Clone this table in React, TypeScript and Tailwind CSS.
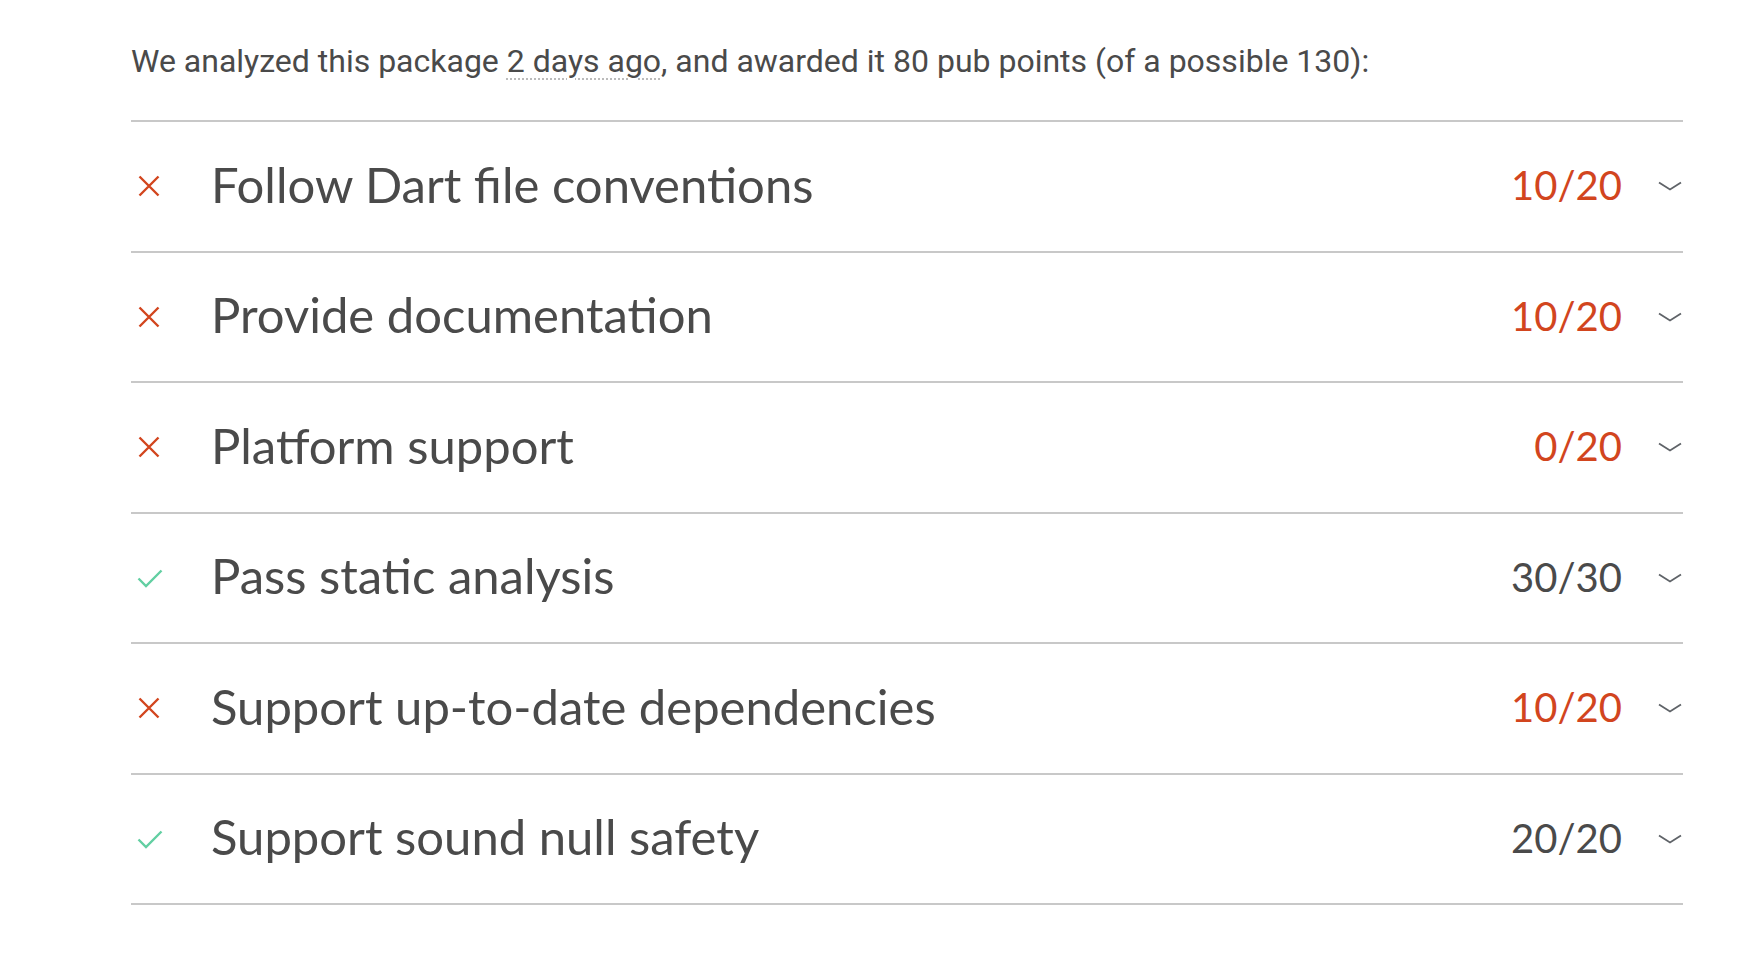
import React from "react";

type Row = { title: string; score: string; ok: boolean };

const rows: Row[] = [
  { title: "Follow Dart file conventions", score: "10/20", ok: false },
  { title: "Provide documentation", score: "10/20", ok: false },
  { title: "Platform support", score: "0/20", ok: false },
  { title: "Pass static analysis", score: "30/30", ok: true },
  { title: "Support up-to-date dependencies", score: "10/20", ok: false },
  { title: "Support sound null safety", score: "20/20", ok: true },
];

function XIcon() {
  return (
    <svg width="24" height="24" viewBox="0 0 24 24" className="block">
      <path d="M2.5 2.5 L21.5 21.5 M21.5 2.5 L2.5 21.5" stroke="#d2451e" strokeWidth="2.4" fill="none" />
    </svg>
  );
}

function CheckIcon() {
  return (
    <svg width="26" height="24" viewBox="0 0 26 24" className="block">
      <path d="M1.5 12.5 L9 20 L24.5 4.5" stroke="#62cfa2" strokeWidth="2.4" fill="none" />
    </svg>
  );
}

function Chevron() {
  return (
    <svg width="24" height="10" viewBox="0 0 24 10" className="block">
      <path d="M1 1.5 L12 8.5 L23 1.5" stroke="#5f6368" strokeWidth="1.8" fill="none" />
    </svg>
  );
}

export default function App() {
  return (
    <div className="min-h-screen w-full bg-white">
      <div className="ml-[131px] w-[1552px]">
        <p
          className="pt-[38px] pb-[35px] text-[32px] leading-[47px] text-[#4a4a4a]"
          style={{ fontFamily: "Roboto, 'Liberation Sans', sans-serif" }}
        >
          We analyzed this package{" "}
          <span className="underline decoration-dotted decoration-[#bbbbbb] decoration-2 underline-offset-[6px]">
            2 days ago
          </span>
          , and awarded it 80 pub points (of a possible 130):
        </p>
        <div className="border-b-2 border-[#c8c8c8]">
          {rows.map((r) => (
            <div
              key={r.title}
              className="flex h-[130.5px] items-center border-t-2 border-[#c8c8c8]"
            >
              <div className="flex w-[80px] shrink-0 items-center pl-[6px]">
                {r.ok ? <CheckIcon /> : <XIcon />}
              </div>
              <div
                className="mb-[4px] flex-1 text-[49px] text-[#4a4a4a]"
                style={{ fontFamily: "Lato, 'Open Sans', sans-serif" }}
              >
                {r.title}
              </div>
              <div
                className={`mb-[2px] text-[40px] ${r.ok ? "text-[#4a4a4a]" : "text-[#d2451e]"}`}
                style={{ fontFamily: "Lato, 'Open Sans', sans-serif" }}
              >
                {r.score}
              </div>
              <div className="ml-[36px] mr-[1px] flex w-[24px] items-center justify-center">
                <Chevron />
              </div>
            </div>
          ))}
        </div>
      </div>
    </div>
  );
}
